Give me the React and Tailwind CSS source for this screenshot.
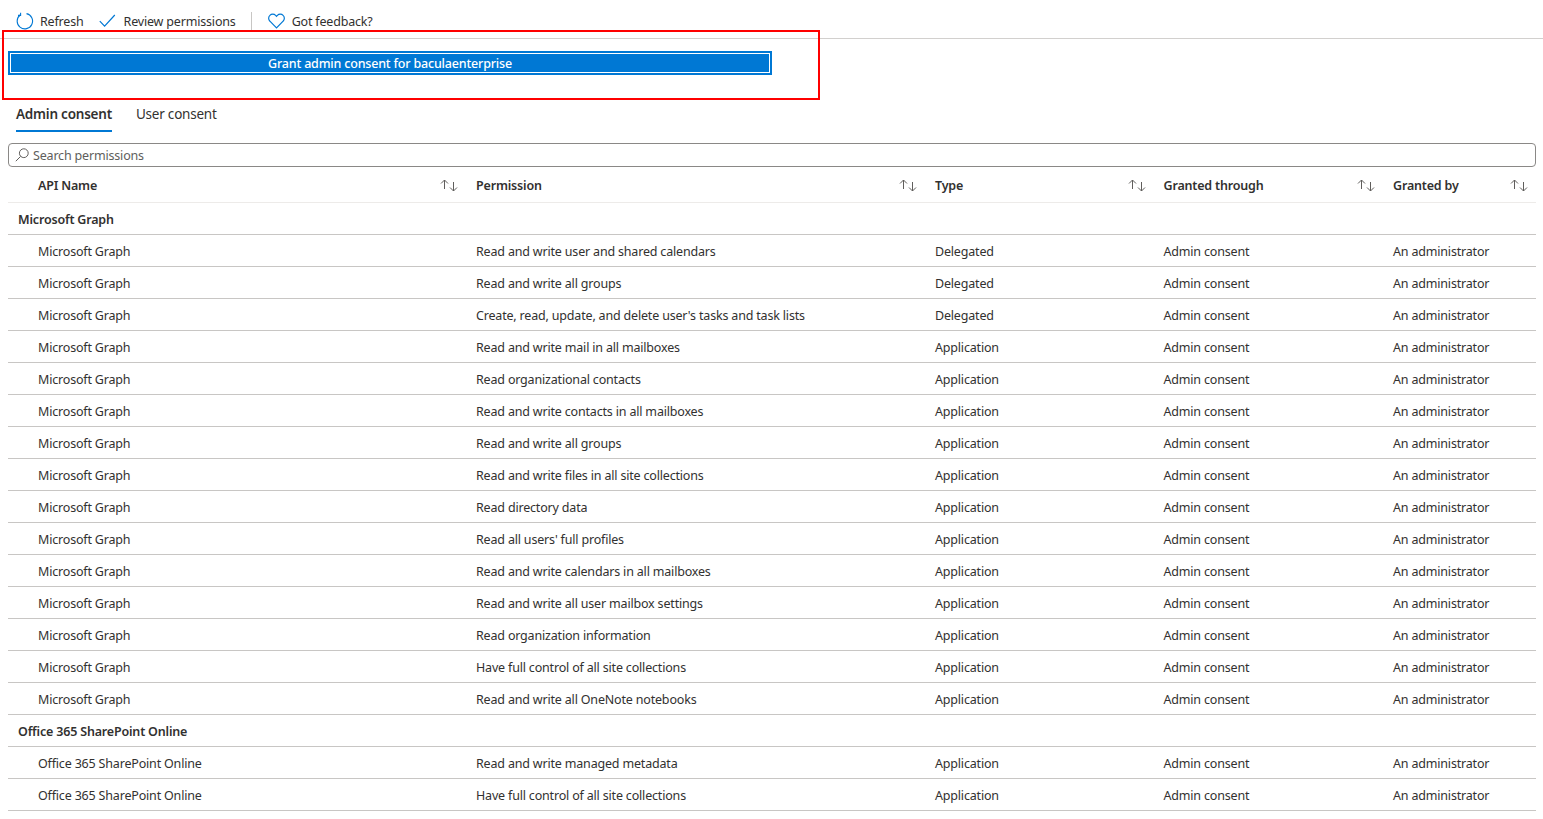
const font = "font-['Noto_Sans',sans-serif]";
const gridCols = 'grid grid-cols-[460px_459px_228.5px_229.5px_151px]';

const perms = [
  ['Microsoft Graph', 'Read and write user and shared calendars', 'Delegated'],
  ['Microsoft Graph', 'Read and write all groups', 'Delegated'],
  ['Microsoft Graph', "Create, read, update, and delete user's tasks and task lists", 'Delegated'],
  ['Microsoft Graph', 'Read and write mail in all mailboxes', 'Application'],
  ['Microsoft Graph', 'Read organizational contacts', 'Application'],
  ['Microsoft Graph', 'Read and write contacts in all mailboxes', 'Application'],
  ['Microsoft Graph', 'Read and write all groups', 'Application'],
  ['Microsoft Graph', 'Read and write files in all site collections', 'Application'],
  ['Microsoft Graph', 'Read directory data', 'Application'],
  ['Microsoft Graph', "Read all users' full profiles", 'Application'],
  ['Microsoft Graph', 'Read and write calendars in all mailboxes', 'Application'],
  ['Microsoft Graph', 'Read and write all user mailbox settings', 'Application'],
  ['Microsoft Graph', 'Read organization information', 'Application'],
  ['Microsoft Graph', 'Have full control of all site collections', 'Application'],
  ['Microsoft Graph', 'Read and write all OneNote notebooks', 'Application'],
];

const sharepoint = [
  ['Office 365 SharePoint Online', 'Read and write managed metadata', 'Application'],
  ['Office 365 SharePoint Online', 'Have full control of all site collections', 'Application'],
];

function RefreshIcon() {
  return (
    <svg width="18" height="18" viewBox="0 0 18 18" fill="none" stroke="#0078d4" strokeWidth="1.1">
      <path d="M10.5 1.6A7.7 7.7 0 1 1 4.2 3" />
      <path d="M4.6 .8V3.4H2" />
    </svg>
  );
}

function CheckIcon() {
  return (
    <svg width="17" height="14" viewBox="0 0 17 14" fill="none" stroke="#0078d4" strokeWidth="1.2">
      <path d="M.8 7.2 5.6 12.2 15.8 1" />
    </svg>
  );
}

function HeartIcon() {
  return (
    <svg width="17" height="16" viewBox="0 0 17 16" fill="none" stroke="#0078d4" strokeWidth="1.2">
      <path d="M8.5 14.8 1.9 8.2A4 4 0 0 1 1.9 2.4 4 4 0 0 1 7.6 2.4L8.5 3.3 9.4 2.4A4 4 0 0 1 15.1 2.4 4 4 0 0 1 15.1 8.2Z" />
    </svg>
  );
}

function SearchIcon() {
  return (
    <svg width="14" height="14" viewBox="0 0 14 14" fill="none" stroke="#605e5c" strokeWidth="1">
      <circle cx="8.8" cy="5.2" r="4.4" />
      <path d="M5.6 8.4 .8 13.2" />
    </svg>
  );
}

function SortIcon() {
  return (
    <svg width="18" height="13" viewBox="0 0 18 13" fill="none" stroke="#605e5c" strokeWidth="1">
      <path d="M4.5 10V1M1 4.5 4.5 1 8 4.5" />
      <path d="M13.5 3V12M10 8.5 13.5 12 17 8.5" />
    </svg>
  );
}

function HeaderCell({ label, first, last }) {
  return (
    <div className={`flex items-center justify-between pt-0.5 ${first ? 'pl-[30px]' : 'pl-2'} ${last ? 'pr-2' : 'pr-[10px]'}`}>
      <span className="font-semibold text-[#323130]">{label}</span>
      <SortIcon />
    </div>
  );
}

function Row({ row }) {
  return (
    <div className={`${gridCols} h-8 items-center border-b border-[#c8c6c4] pt-0.5 text-[#323130]`}>
      <div className="pl-[30px]">{row[0]}</div>
      <div className="pl-2">{row[1]}</div>
      <div className="pl-2">{row[2]}</div>
      <div className="pl-2">Admin consent</div>
      <div className="pl-2">An administrator</div>
    </div>
  );
}

function GroupRow({ label }) {
  return (
    <div className="flex h-8 items-center border-b border-[#c8c6c4] pl-2.5 pt-0.5 font-semibold text-[#323130]">
      {label}
    </div>
  );
}

export default function App() {
  return (
    <div className={`relative h-[819px] overflow-hidden bg-white text-[12.5px] leading-[18px] tracking-[-0.18px] ${font}`}>
      {/* toolbar */}
      <div className="flex h-[39px] items-end border-b border-[#d2d0ce] pb-[7px] pl-4 text-[#323130]">
        <div className="flex items-center gap-1.5">
          <RefreshIcon />
          <span className="pt-0.5">Refresh</span>
        </div>
        <div className="ml-[15px] flex items-center gap-2">
          <CheckIcon />
          <span className="pt-0.5">Review permissions</span>
        </div>
        <div className="ml-[15px] mr-4 mb-px h-[18px] w-px bg-[#c8c6c4]" />
        <div className="flex items-center gap-[7px]">
          <HeartIcon />
          <span className="pt-0.5">Got feedback?</span>
        </div>
      </div>

      <div className="px-2">
        <div className="pt-3">
          <button className="flex h-6 w-[764px] items-center justify-center border-2 border-[#0078d4] bg-[#0078d4] pt-0.5 font-medium text-white outline outline-1 -outline-offset-3 outline-white">
            Grant admin consent for baculaenterprise
          </button>
        </div>

        {/* tabs */}
        <div className="mt-[29px] flex gap-6 pl-2 text-[13.5px] leading-5 tracking-[-0.22px]">
          <div className="border-b-2 border-[#0078d4] pb-1.5 font-semibold text-[#323130]">Admin consent</div>
          <div className="pb-1.5 text-[#323130]">User consent</div>
        </div>

        <div className="mt-[11px] flex h-6 w-[1528px] items-center gap-1 rounded-sm border border-[#8a8886] pl-[6px] text-[#605e5c]">
          <SearchIcon />
          <span className="pt-0.5">Search permissions</span>
        </div>

        <div className={`${gridCols} h-9 w-[1528px] border-b border-[#edebe9]`}>
          <HeaderCell label="API Name" first />
          <HeaderCell label="Permission" />
          <HeaderCell label="Type" />
          <HeaderCell label="Granted through" />
          <HeaderCell label="Granted by" last />
        </div>

        <div className="w-[1528px]">
          <GroupRow label="Microsoft Graph" />
          {perms.map((row, i) => <Row key={i} row={row} />)}
          <GroupRow label="Office 365 SharePoint Online" />
          {sharepoint.map((row, i) => <Row key={i} row={row} />)}
        </div>
      </div>

      {/* highlight drawn over the screenshot */}
      <div className="pointer-events-none absolute left-[2px] top-[30px] h-[70px] w-[818px] border-2 border-[#ff0000]" />
    </div>
  );
}
